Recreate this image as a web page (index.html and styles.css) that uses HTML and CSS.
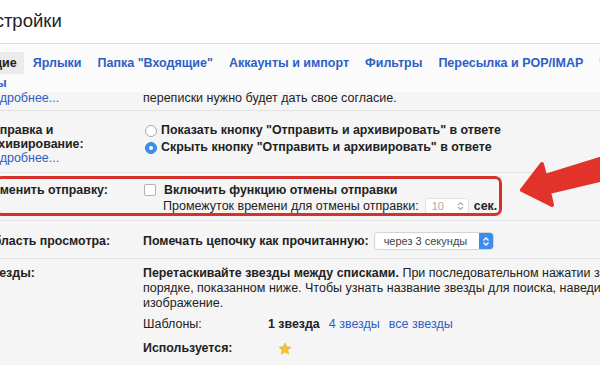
FILE: index.html
```html
<!DOCTYPE html>
<html lang="ru">
<head>
<meta charset="utf-8">
<title>Настройки</title>
<link rel="stylesheet" href="styles.css">
</head>
<body>
<header class="top"><h1 class="title">Настройки</h1></header>
<nav class="tabs">
  <div class="tabline">
    <a class="tab active">Общие</a>
    <a class="tab">Ярлыки</a>
    <a class="tab">Папка "Входящие"</a>
    <a class="tab">Аккаунты и импорт</a>
    <a class="tab">Фильтры</a>
    <a class="tab">Пересылка и POP/IMAP</a>
    <a class="tab">Чат</a>
  </div>
  <div class="tabline second"><a class="tab">Темы</a></div>
</nav>
<main class="settings">
  <div class="row row-a">
    <div class="label"><a class="more">Подробнее...</a></div>
    <div class="value">переписки нужно будет дать свое согласие.</div>
  </div>
  <div class="row row-b">
    <div class="label"><b>Отправка и<br>архивирование:</b><br><a class="more">Подробнее...</a></div>
    <div class="value">
      <div class="opt"><span class="radio"></span><b>Показать кнопку "Отправить и архивировать" в ответе</b></div>
      <div class="opt"><span class="radio on"></span><b>Скрыть кнопку "Отправить и архивировать" в ответе</b></div>
    </div>
  </div>
  <div class="row row-c">
    <div class="label"><b>Отменить отправку:</b></div>
    <div class="value">
      <div class="line"><span class="check"></span><b>Включить функцию отмены отправки</b></div>
      <div class="line indent">Промежуток времени для отмены отправки:<span class="num">10<svg class="spin" width="7" height="10" viewBox="0 0 7 10"><path d="M1 4 3.5 1.5 6 4M1 6 3.5 8.5 6 6" fill="none" stroke="#aaa" stroke-width="1.1"/></svg></span><b>сек.</b></div>
    </div>
    <div class="mark"></div>
  </div>
  <div class="row row-d">
    <div class="label"><b>Область просмотра:</b></div>
    <div class="value"><b>Помечать цепочку как прочитанную:</b><span class="select">через 3 секунды<span class="stepper"><svg width="8" height="11" viewBox="0 0 8 11"><path d="M1.5 4.5 4 2 6.5 4.5M1.5 6.5 4 9 6.5 6.5" fill="none" stroke="#fff" stroke-width="1.3"/></svg></span></span></div>
  </div>
  <div class="row row-e">
    <div class="label"><b>Звезды:</b></div>
    <div class="value">
      <p class="desc"><b>Перетаскивайте звезды между списками.</b> При последовательном нажатии звезды будут меняться в том<br>порядке, показанном ниже. Чтобы узнать название звезды для поиска, наведите указатель мыши на<br>изображение.</p>
      <div class="pair first"><span class="k">Шаблоны:</span><span class="v"><b>1 звезда</b><a class="lnk">4 звезды</a><a class="lnk">все звезды</a></span></div>
      <div class="pair second"><b class="k">Используется:</b><span class="v"><svg class="star" width="14" height="14" viewBox="0 0 24 24"><path d="M12 1.5 15.1 8.2 22.4 8.9 16.9 13.8 18.5 21 12 17.3 5.5 21 7.1 13.8 1.6 8.9 8.9 8.2Z" fill="#f6c232" stroke="#e0a81a" stroke-width="0.8"/></svg></span></div>
    </div>
  </div>
</main>
<svg class="arrow" width="90" height="70" viewBox="515 150 90 70">
  <polygon points="522,190 542,164 545,176 600,159 600,180 549,192 552,205" fill="#e2332b" stroke="#e2332b" stroke-width="4" stroke-linejoin="round"/>
</svg>
</body>
</html>
```
FILE: styles.css
```css
html, body {
  margin: 0;
  padding: 0;
}
body {
  width: 600px;
  height: 365px;
  overflow: hidden;
  position: relative;
  background: #f5f5f5;
  font-family: "Liberation Sans", Arial, sans-serif;
  font-size: 12.5px;
  color: #222;
}
b {
  font-weight: bold;
  font-size: 12.4px;
}
.top {
  height: 43px;
  background: #fff;
  border-bottom: 1px solid #dedede;
  overflow: hidden;
}
.title {
  margin: 0 0 0 -29px;
  font-size: 18.5px;
  font-weight: normal;
  line-height: 41px;
  color: #222;
  white-space: nowrap;
}
.tabs {
  height: 48px;
  background: #fbfbfb;
  overflow: hidden;
}
.tabline {
  display: flex;
  white-space: nowrap;
  margin: 8px 0 0 -33px;
}
.tabline.second {
  margin: -2px 0 0 -34px;
}
.tab {
  display: block;
  padding: 0 7px;
  margin-right: 2px;
  line-height: 22px;
  font-size: 12.5px;
  font-weight: bold;
  color: #2d5fc4;
}
.tab.active {
  background: #ebebeb;
  color: #222;
}
.settings {
  margin-left: -16px;
}
.row {
  display: flex;
  border-bottom: 1px solid #e2e2e2;
  position: relative;
}
.label {
  width: 159px;
  flex: none;
  line-height: 14px;
}
.value {
  flex: 1;
  white-space: nowrap;
}
.more {
  color: #2d5fc4;
}
.row-a {
  padding: 0 0 6px;
  line-height: 12px;
}
.row-a .label { line-height: 12px; }
.row-b {
  padding: 12px 0 7px;
}
.row-b .value { margin-top: -1px; }
.opt {
  display: flex;
  align-items: center;
  line-height: 17px;
}
.radio {
  width: 10px;
  height: 10px;
  border: 1px solid #a9a9a9;
  border-radius: 50%;
  background: #fff;
  margin: 0 4px 0 2px;
  flex: none;
}
.radio.on {
  background: #3b8ceb;
  border-color: #2f7ad6;
  box-shadow: inset 0 0 0 3px #3b8ceb, inset 0 0 0 6px #fff;
}
.row-c {
  padding: 9px 0 6px;
  line-height: 16px;
}
.row-c .label { line-height: 16px; }
.line {
  display: flex;
  align-items: center;
  height: 16px;
}
.check {
  width: 10px;
  height: 10px;
  border: 1px solid #b0b0b0;
  border-radius: 2px;
  background: #fff;
  margin: 0 8px 0 1px;
}
.indent {
  padding-left: 20px;
}
.num {
  display: inline-flex;
  align-items: center;
  justify-content: space-between;
  box-sizing: border-box;
  width: 44px;
  height: 16px;
  margin: 0 5px 0 6px;
  padding: 0 4px 0 6px;
  background: #fff;
  border: 1px solid #e4e4e4;
  border-radius: 3px;
  color: #aaa;
  font-size: 11px;
}
.mark {
  position: absolute;
  left: 11px;
  top: 3px;
  width: 507px;
  height: 40px;
  box-sizing: border-box;
  border: 3px solid #d8312b;
  border-radius: 7px;
  pointer-events: none;
}
.row-d {
  padding: 11px 0 8px;
  line-height: 18px;
}
.row-d .label { line-height: 18px; }
.row-d .value {
  display: flex;
  align-items: center;
}
.select {
  display: inline-flex;
  align-items: center;
  justify-content: space-between;
  box-sizing: border-box;
  width: 120px;
  height: 18px;
  margin-left: 5px;
  padding-left: 9px;
  background: #fff;
  border: 1px solid #d4d4d4;
  border-radius: 4px;
  color: #444;
  font-size: 11px;
}
.stepper {
  display: flex;
  align-items: center;
  justify-content: center;
  width: 14px;
  height: 16px;
  background: #3d8bea;
  border-radius: 0 3px 3px 0;
}
.row-e {
  padding-top: 7px;
  border-bottom: none;
  line-height: 15px;
}
.row-e .label { line-height: 15px; }
.desc {
  margin: 0;
  white-space: nowrap;
  line-height: 15px;
}
.pair {
  display: flex;
  line-height: 15px;
}
.pair.first { margin-top: 6px; }
.pair.second { margin-top: 9px; }
.k {
  width: 125px;
  flex: none;
}
.v {
  display: flex;
  align-items: center;
}
.lnk {
  color: #2d5fc4;
  margin-left: 9px;
}
.star {
  margin-left: 10px;
}
.arrow {
  position: absolute;
  left: 515px;
  top: 150px;
}
```
